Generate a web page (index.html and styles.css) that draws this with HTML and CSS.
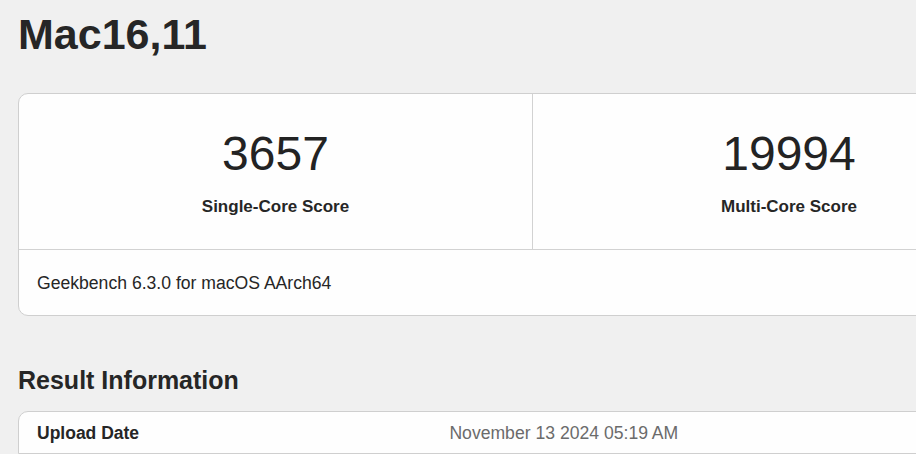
FILE: index.html
```html
<!DOCTYPE html>
<html lang="en">
<head>
<meta charset="utf-8">
<title>Mac16,11 - Geekbench</title>
<link rel="stylesheet" href="styles.css">
</head>
<body>
<div class="page">
  <h1 class="title">Mac16,11</h1>

  <div class="card score-card">
    <div class="scores">
      <div class="score">
        <div class="score-value">3657</div>
        <div class="score-label">Single-Core Score</div>
      </div>
      <div class="score">
        <div class="score-value">19994</div>
        <div class="score-label">Multi-Core Score</div>
      </div>
    </div>
    <div class="card-footer">Geekbench 6.3.0 for macOS AArch64</div>
  </div>

  <h2 class="section-title">Result Information</h2>

  <div class="card info-card">
    <div class="info-row">
      <div class="info-name">Upload Date</div>
      <div class="info-value">November 13 2024 05:19 AM</div>
    </div>
  </div>
</div>
</body>
</html>
```

FILE: styles.css
```css
html, body {
  margin: 0;
  padding: 0;
}

body {
  background: #f0f0f0;
  color: #232323;
  font-family: "Liberation Sans", Arial, Helvetica, sans-serif;
  overflow: hidden;
}

.page {
  width: 1028px;
  padding: 9px 18px 0 18px;
}

.title {
  margin: 0;
  font-size: 43px;
  line-height: 50px;
  font-weight: 700;
  color: #262626;
}

.card {
  background: #fefefe;
  border: 1px solid #cfcfcf;
  border-radius: 10px;
}

.score-card {
  margin-top: 34px;
}

.scores {
  display: grid;
  grid-template-columns: 1fr 1fr;
  border-bottom: 1px solid #d2d2d2;
}

.score {
  padding: 32px 0;
  text-align: center;
}

.score + .score {
  border-left: 1px solid #d2d2d2;
}

.score-value {
  font-size: 48px;
  line-height: 56px;
  font-weight: 400;
  color: #232323;
}

.score-label {
  margin-top: 15px;
  font-size: 17px;
  line-height: 20px;
  font-weight: 700;
  color: #262626;
}

.card-footer {
  padding: 23px 18px 22px;
  font-size: 17.6px;
  line-height: 20px;
  color: #262626;
}

.section-title {
  margin: 49px 0 0 0;
  font-size: 25px;
  line-height: 30px;
  font-weight: 700;
  color: #262626;
}

.info-card {
  margin-top: 16px;
  border-bottom-left-radius: 0;
  border-bottom-right-radius: 0;
}

.info-row {
  display: grid;
  grid-template-columns: 40% 60%;
}

.info-name,
.info-value {
  padding: 11px 18px 10px;
  font-size: 17.5px;
  line-height: 20px;
}

.info-name {
  font-weight: 700;
  color: #262626;
}

.info-value {
  padding-left: 20px;
  color: #6b6b6b;
  font-size: 17.6px;
}
```
